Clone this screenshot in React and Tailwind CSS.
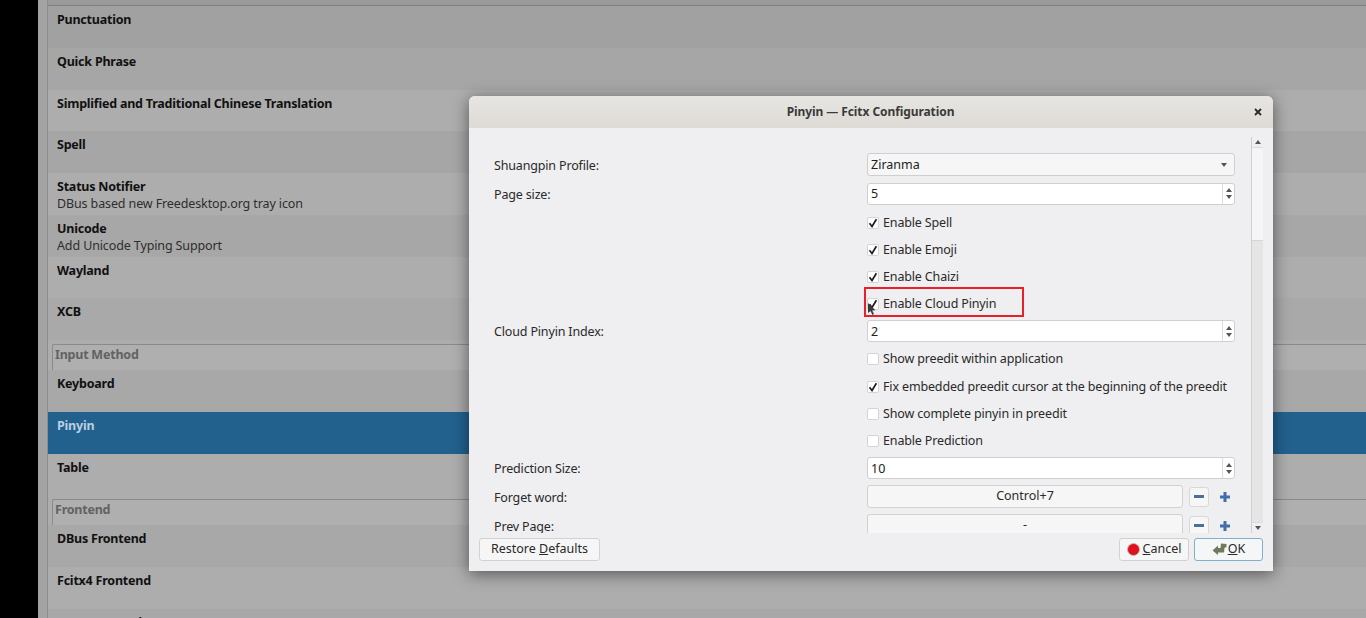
import React from "react";

const font = "font-['Noto_Sans',sans-serif]";

const Row = ({ title, sub, tone = "bg-[#a8a8a8]" }) => (
  <div className={`h-[41.75px] pl-[9px] pt-[5px] text-[12.5px] leading-[17px] ${tone}`}>
    <div className="font-bold text-[#111] tracking-[-0.22px]">{title}</div>
    {sub && <div className="text-[#2e2e2e] tracking-[-0.12px]">{sub}</div>}
  </div>
);

const Header = ({ title }) => (
  <div className="h-[26px] mt-[4px] ml-[4px] rounded-tl-[2px] border-l border-t border-[#8a8a8a] pl-[2px] pt-[1px] text-[12.5px] leading-[17px] font-bold text-[#626262] tracking-[-0.22px] bg-[#afafaf]">
    {title}
  </div>
);

const Spin = ({ value }) => (
  <div className="h-[22px] w-[368px] flex items-center rounded-[3px] border border-[#cfcfcf] bg-white pl-[3px] text-[12.5px] text-[#222]">
    <span className="flex-1 pt-[2px]">{value}</span>
    <div className="h-full w-[12px] border-l border-[#dcdcdc] flex flex-col items-center justify-center gap-[3px]">
      <div className="w-0 h-0 border-x-[3px] border-x-transparent border-b-[4px] border-b-[#555]" />
      <div className="w-0 h-0 border-x-[3px] border-x-transparent border-t-[4px] border-t-[#555]" />
    </div>
  </div>
);

const Check = ({ label, checked, h = "h-[27px]" }) => (
  <div className={`${h} col-start-2 flex items-center gap-[4px] text-[12.5px] text-[#2a2a2a] tracking-[-0.15px] whitespace-nowrap`}>
    <div className="w-[12px] h-[12px] rounded-[2px] border border-[#d4d4d4] bg-white flex items-center justify-center">
      {checked && (
        <svg width="10" height="10" viewBox="0 0 10 10">
          <path d="M1.5 5.2 L4 8.4 L8.4 1.2" fill="none" stroke="#1c1c1c" strokeWidth="1.7" />
        </svg>
      )}
    </div>
    <span className="pt-[1px]">{label}</span>
  </div>
);

const Label = ({ children, h, pt = "pt-[2px]" }) => (
  <div className={`${h} ${pt} flex items-center text-[12.5px] text-[#2a2a2a] tracking-[-0.16px]`}>{children}</div>
);

const KeyRow = ({ value, label, h }) => (
  <>
    <Label h={h} pt="pt-[4px]">{label}</Label>
    <div className={`${h} flex items-center`}>
      <div className="h-[23px] w-[316px] rounded-[3px] border border-[#d2d2d2] bg-[#f6f6f7] flex items-center justify-center text-[12.5px] text-[#2a2a2a]">
        {value}
      </div>
      <div className="ml-[6px] w-[20px] h-[20px] rounded-[3px] border border-[#d8d8d8] bg-[#f6f6f7] flex items-center justify-center">
        <div className="w-[10px] h-[3px] bg-[#4a6f9f]" />
      </div>
      <svg className="ml-[10px]" width="12" height="12" viewBox="0 0 12 12">
        <path d="M4.5 1h3v3.5H11v3H7.5V11h-3V7.5H1v-3h3.5z" fill="#3f6ea8" />
      </svg>
    </div>
  </>
);

const Dialog = () => (
  <div className={`absolute left-[469px] top-[96px] w-[804px] h-[475px] rounded-t-[6px] bg-[#efeff1] shadow-[0_3px_16px_rgba(0,0,0,0.5)] flex flex-col ${font}`}>
    <div className="h-[32px] shrink-0 rounded-t-[6px] bg-gradient-to-b from-[#e7e5e2] to-[#dedbd6] flex items-center text-[12px] font-bold text-[#3a3a3a] tracking-[-0.08px]">
      <span className="flex-1 text-center pl-[18px]">Pinyin — Fcitx Configuration</span>
      <svg className="mr-[11px]" width="8" height="8" viewBox="0 0 8 8">
        <path d="M1 1 L7 7 M7 1 L1 7" stroke="#2a2a2a" strokeWidth="1.8" />
      </svg>
    </div>
    <div className="relative h-[405px] shrink-0 flex pl-[25px]">
      <div className="w-[757px] overflow-hidden">
        <div className="grid grid-cols-[373px_368px] pt-[23px]">
          <Label h="h-[29px]">Shuangpin Profile:</Label>
          <div className="h-[29px] pb-[2px] flex items-center">
            <div className="h-[23px] w-[368px] flex items-center rounded-[3px] border border-[#cfcfcf] bg-[#f6f6f7] pl-[3px] pr-[7px] text-[12.5px] text-[#222]">
              <span className="flex-1 pt-[2px]">Ziranma</span>
              <div className="w-0 h-0 border-x-[3px] border-x-transparent border-t-[4px] border-t-[#555]" />
            </div>
          </div>
          <Label h="h-[29px]">Page size:</Label>
          <div className="h-[29px] pb-[2px] flex items-center"><Spin value="5" /></div>
          <Check label="Enable Spell" checked />
          <Check label="Enable Emoji" checked />
          <Check label="Enable Chaizi" checked />
          <Check label="Enable Cloud Pinyin" checked />
          <Label h="h-[28px]">Cloud Pinyin Index:</Label>
          <div className="h-[28px] flex items-center"><Spin value="2" /></div>
          <Check label="Show preedit within application" h="h-[28px]" />
          <Check label="Fix embedded preedit cursor at the beginning of the preedit" checked />
          <Check label="Show complete pinyin in preedit" />
          <Check label="Enable Prediction" />
          <Label h="h-[28px]">Prediction Size:</Label>
          <div className="h-[28px] flex items-center"><Spin value="10" /></div>
          <KeyRow label="Forget word:" value="Control+7" h="h-[29px]" />
          <KeyRow label="Prev Page:" value="-" h="h-[29px]" />
        </div>
      </div>
      {/* scrollbar */}
      <div className="w-[12px] mt-[9px] bg-[#e5e5e6] border-l border-[#cfcfcf] flex flex-col">
        <div className="h-[11px] bg-[#efeff1] border-b border-[#dcdcdc] flex items-center justify-center">
          <div className="w-0 h-0 border-x-[3px] border-x-transparent border-b-[4px] border-b-[#555]" />
        </div>
        <div className="h-[93px] bg-[#f5f5f7] border-b border-[#d6d6d6]" />
        <div className="flex-1" />
        <div className="h-[11px] bg-[#efeff1] border-t border-[#dcdcdc] flex items-center justify-center">
          <div className="w-0 h-0 border-x-[3px] border-x-transparent border-t-[4px] border-t-[#555]" />
        </div>
      </div>
    </div>
    <div className="flex-1 flex items-start pt-[5px] px-[10px] text-[12.5px] text-[#2a2a2a]">
      <button className="h-[23px] w-[121px] rounded-[3px] border border-[#d2d2d2] bg-[#f6f6f7]">
        Restore <span className="underline">D</span>efaults
      </button>
      <div className="flex-1" />
      <button className="h-[23px] w-[70px] rounded-[3px] border border-[#d2d2d2] bg-[#f6f6f7] flex items-center justify-center gap-[3px]">
        <span className="w-[13px] h-[13px] rounded-full bg-[#e0101c] border border-[#bdbdbd]" />
        <span><span className="underline">C</span>ancel</span>
      </button>
      <button className="ml-[5px] h-[23px] w-[69px] rounded-[3px] border border-[#7fb0cc] bg-[#f4f6f8] flex items-center justify-center gap-[1px]">
        <svg width="15" height="13" viewBox="0 0 15 13">
          <path d="M14.5 1 L9 0.5 L8.5 5 L6 5 L6 2.5 L0.5 7.5 L6 12 L6 9.5 L12 9.5 L12.5 5 L14.5 4z" fill="#6f7a5c" />
        </svg>
        <span><span className="underline">O</span>K</span>
      </button>
    </div>
    {/* annotation over the Enable Cloud Pinyin row */}
    <div className="absolute left-[395px] top-[191px] w-[160px] h-[30px] border-2 border-[#e8202c]" />
    <svg className="absolute left-[398px] top-[206px]" width="10" height="14" viewBox="0 0 10 14">
      <path d="M1 1 L1 11 L3.5 9 L5.5 13 L7 12 L5.2 8.4 L8.4 8.2z" fill="#3a3a3a" />
    </svg>
  </div>
);

export default function App() {
  return (
    <div className={`relative h-[618px] w-[1366px] overflow-hidden flex bg-black ${font}`}>
      <div className="w-[38px] shrink-0 bg-black" />
      <div className="w-[10px] shrink-0 bg-[#a3a3a3] border-r border-[#8c8c8c]" />
      <div className="flex-1 min-w-0 bg-[#adadad]">
        <div className="h-[6px] bg-[#9a9a9a] border-b border-[#7f7f7f]" />
        <Row title="Punctuation" tone="bg-[#a1a1a1]" />
        <Row title="Quick Phrase" tone="bg-[#a6a6a6]" />
        <Row title="Simplified and Traditional Chinese Translation" tone="bg-[#adadad]" />
        <Row title="Spell" tone="bg-[#a6a6a6]" />
        <Row title="Status Notifier" sub="DBus based new Freedesktop.org tray icon" tone="bg-[#adadad]" />
        <Row title="Unicode" sub="Add Unicode Typing Support" tone="bg-[#a7a7a7]" />
        <Row title="Wayland" tone="bg-[#adadad]" />
        <Row title="XCB" tone="bg-[#a9a9a9]" />
        <Header title="Input Method" />
        <Row title="Keyboard" tone="bg-[#a8a8a8]" />
        <Row title="Pinyin" tone="bg-[#22618e] [&>div]:text-[#b9cfe0]" />
        <Row title="Table" tone="bg-[#adadad]" />
        <Header title="Frontend" />
        <Row title="DBus Frontend" tone="bg-[#a8a8a8]" />
        <Row title="Fcitx4 Frontend" tone="bg-[#adadad]" />
        <Row title="IBus Frontend" tone="bg-[#a8a8a8]" />
      </div>
      <Dialog />
    </div>
  );
}
